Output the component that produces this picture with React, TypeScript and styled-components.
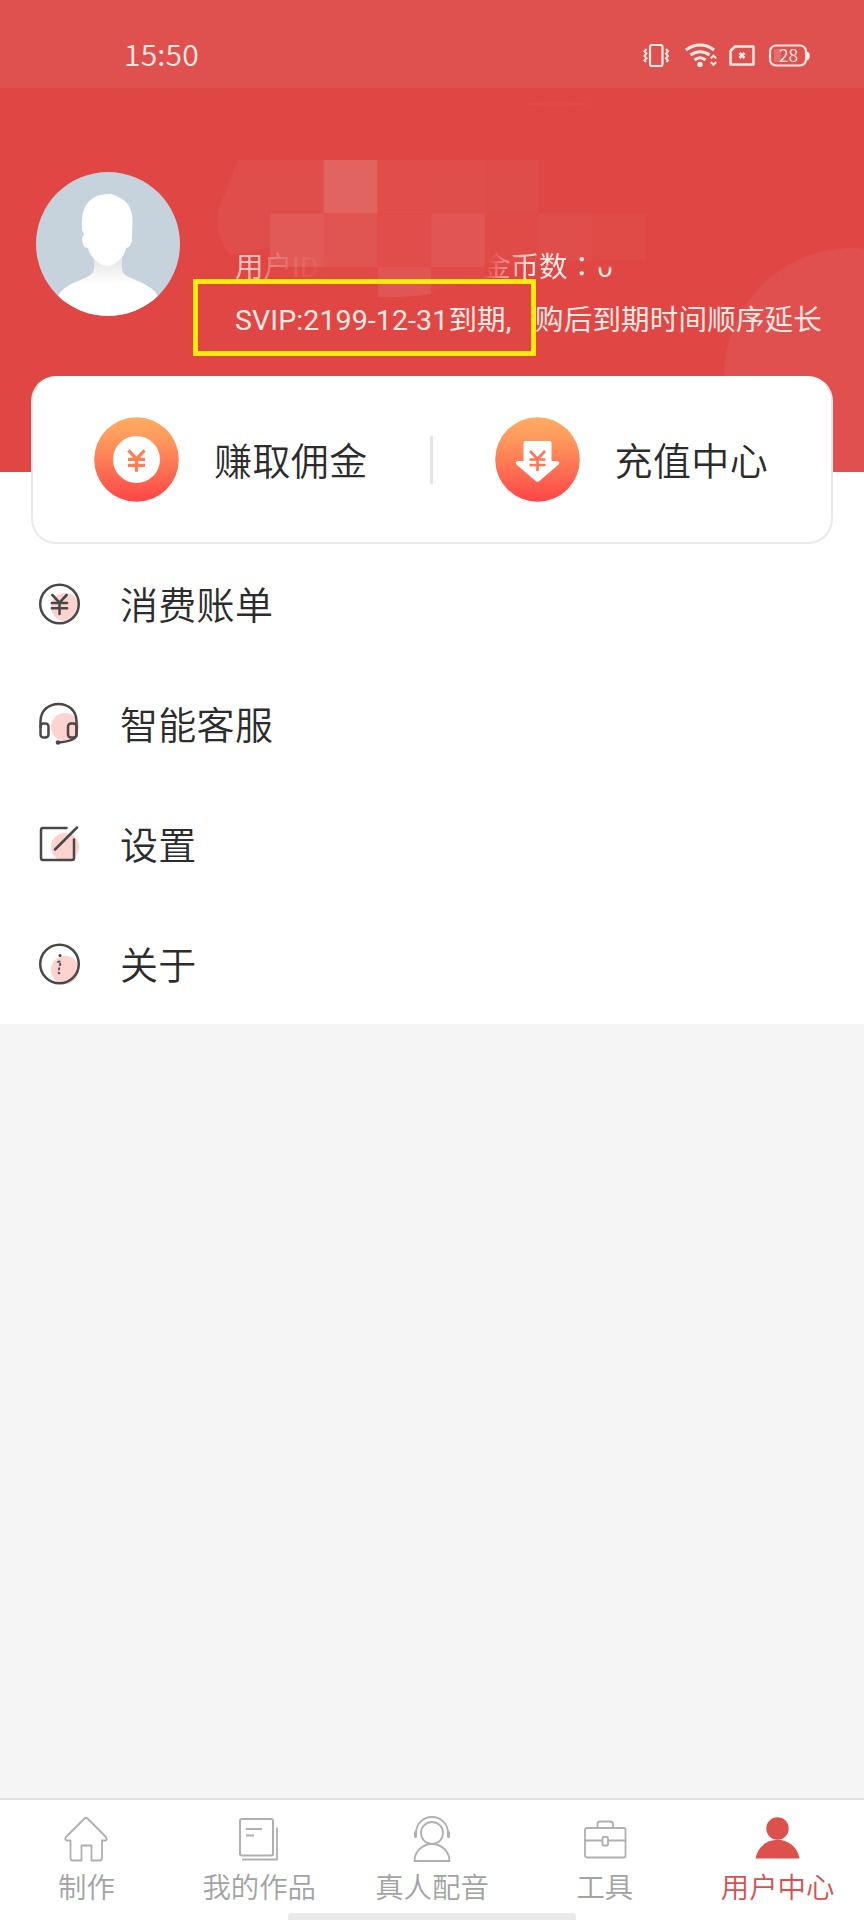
import React from "react";
import styled, { createGlobalStyle } from "styled-components";

const GlobalStyle = createGlobalStyle`
  * { box-sizing: border-box; }
  body {
    margin: 0;
    background: #f5f5f5;
    font-family: Roboto, "Noto Sans CJK SC", sans-serif;
    font-weight: 400;
  }
`;

const Screen = styled.div`
  width: 864px;
  height: 1920px;
  display: flex;
  flex-direction: column;
  background: #f5f5f5;
  overflow: hidden;
`;

const Hero = styled.header`
  position: relative;
  height: 472px;
  flex: none;
  background: #e04643;
  overflow: hidden;
`;

const StatusBar = styled.div`
  height: 88px;
  padding: 22px 53px 0 124px;
  display: flex;
  align-items: center;
  justify-content: space-between;
  background: #de514e;
  color: #ffe9e4;
`;

const Clock = styled.span`
  margin-top: -4px;
  font: 350 30px/36px "Noto Sans CJK SC", sans-serif;
  letter-spacing: 0.2px;
`;

const StatusIcons = styled.div`
  display: flex;
  align-items: center;
  padding-top: 1px;
`;

const HeroDecor = styled.svg`
  position: absolute;
  left: 0;
  top: 88px;
`;

const Profile = styled.div`
  position: relative;
  display: flex;
  padding: 84px 0 0 36px;
`;

const Avatar = styled.svg`
  width: 144px;
  height: 144px;
  flex: none;
`;

const ProfileText = styled.div`
  position: relative;
  padding: 77px 0 0 55px;
  color: #ffe9e4;
  font-size: 28.5px;
  white-space: nowrap;
`;

const AccountLine = styled.div`
  display: flex;
  height: 38px;
  line-height: 38px;
`;

const UserId = styled.span`
  width: 247px;
  mask-image: linear-gradient(90deg, rgba(0, 0, 0, 0.75) 0 24px, rgba(0, 0, 0, 0.3) 34px, rgba(0, 0, 0, 0.12) 60px, transparent 96px);
`;

const CoinLabel = styled.span`
  width: 115px;
  margin-top: -3px;
  mask-image: linear-gradient(115deg, transparent 0 12px, rgba(0, 0, 0, 0.5) 32px, #000 52px);
`;

const Colon = styled.span`
  font-family: "Noto Sans CJK TC", sans-serif;
`;

const CoinValue = styled.span`
  mask-image: linear-gradient(180deg, transparent 0 17px, #000 20px);
`;

const VipLine = styled.div`
  height: 38px;
  margin-top: 15px;
  line-height: 38px;
  display: flex;
`;

const VipExpiry = styled.span`
  width: 300px;
  letter-spacing: 0.12px;
`;

const VipNote = styled.span`
  letter-spacing: 0.2px;
`;

const Mosaic = styled.svg`
  position: absolute;
  left: 205px;
  top: 72px;
`;

const Highlight = styled.div`
  position: absolute;
  left: 193px;
  top: 279px;
  width: 343px;
  height: 77px;
  border: 5px solid #ffeb0f;
`;

const Body = styled.main`
  position: relative;
  height: 552px;
  flex: none;
  background: #fff;
`;

const ActionCard = styled.section`
  position: relative;
  height: 168px;
  margin: -96px 31px 0;
  display: flex;
  align-items: center;
  background: #fff;
  border: 2px solid #e9e9e9;
  border-top-color: #fff;
  border-radius: 25px;
`;

const Action = styled.button`
  flex: 1;
  height: 100%;
  padding: 0 0 2px 61px;
  display: flex;
  align-items: center;
  gap: 35px;
  border: 0;
  background: none;
  color: #2c2c2c;
  font: 350 38px/48px "Noto Sans CJK SC", sans-serif;
  letter-spacing: 0.4px;
`;

const Divider = styled.i`
  width: 3px;
  height: 48px;
  margin: 0 1px 0 -1px;
  background: #e6e6e6;
`;

const Menu = styled.nav`
  display: flex;
  flex-direction: column;
`;

const MenuItem = styled.a`
  height: 120px;
  padding: 0 0 0 36px;
  display: flex;
  align-items: center;
  gap: 36px;
  color: #2c2c2c;
  font: 350 38px/48px "Noto Sans CJK SC", sans-serif;
  letter-spacing: 0.3px;

  svg { flex: none; }
`;

const MenuLabel = styled.span`
  margin-top: -2px;
`;

const TabBar = styled.footer`
  position: relative;
  height: 122px;
  margin-top: auto;
  display: flex;
  background: #fff;
  border-top: 2px solid #e2e2e2;
`;

const Tab = styled.button<{ $active?: boolean }>`
  flex: 1;
  padding: 15px 0 0;
  display: flex;
  flex-direction: column;
  align-items: center;
  gap: 4px;
  border: 0;
  background: none;
  color: ${(p) => (p.$active ? "#d9504e" : "#a3a3a3")};
  font: 350 28.4px/38px "Noto Sans CJK SC", sans-serif;
  white-space: nowrap;
`;

const HomeIndicator = styled.div`
  position: absolute;
  left: 288px;
  bottom: 0;
  width: 288px;
  height: 7px;
  border-radius: 4px 4px 0 0;
  background: #e9e9e9;
`;

const Yen = ({ x, y, s = 1, color, w = 2.4 }: { x: number; y: number; s?: number; color: string; w?: number }) => (
  <g transform={`translate(${x} ${y}) scale(${s})`} fill="none" stroke={color} strokeWidth={w}>
    <path d="M-7.5-10 0-2 7.5-10M0-2V10M-8-1.5H8M-8 4H8" />
  </g>
);

/* Tiles of the pixelated band: column, row, colour */
const tiles: [number, number, string][] = [
  [0, 0, "#e04e4b"], [1, 0, "#e26461"], [2, 0, "#e04d4a"], [3, 0, "#e04e4c"], [4, 0, "#df4d4a"],
  [0, 1, "#e15a57"], [1, 1, "#e05552"], [2, 1, "#e04d4a"], [3, 1, "#e15655"], [4, 1, "#e04b48"],
  [5, 1, "#e04e4c"], [6, 1, "#e04a47"],
];

function StatusGlyphs() {
  return (
    <StatusIcons>
      <svg width="168" height="30" viewBox="0 0 168 30" fill="none" stroke="#ffe9e4" strokeWidth="2">
        <rect x="7" y="4" width="12.5" height="21" rx="2" strokeWidth="2.2" />
        <path d="m3.500 8-2 2.300 2 2.300-2 2.300 2 2.300-2 2.300 1.500 1.500M23 8l2 2.300-2 2.300 2 2.300-2 2.300 2 2.300-1.500 1.500" strokeWidth="2" />
        <path d="M43 9c8.500-6.800 20-6.800 28 0M47.500 14c6-4.500 13.500-4.500 19 0M51.500 19c3.500-2.700 7.800-2.700 11 0" strokeWidth="3" />
        <circle cx="57" cy="23.500" r="2.700" fill="#ffe9e4" stroke="none" />
        <path d="m67.800 17.500 2.700-2.900 2.700 2.900M67.800 21l2.700 2.900 2.700-2.900" strokeWidth="2" />
        <path d="M92 5.500H110.500V23.500H87.500V10Z" strokeLinejoin="round" strokeWidth="2.500" />
        <path d="m96.500 12 5 5m0-5-5 5" strokeWidth="2.600" />
        <rect x="127" y="4.500" width="36" height="20" rx="6" strokeWidth="2.200" />
        <path d="M164 11.500c2.500 1 2.500 6 0 7" fill="#ffe9e4" />
        <path d="M131 8h7v13h-7z" fill="#fff" opacity=".18" stroke="none" />
        <text x="145.500" y="20.500" textAnchor="middle" fill="#ffe9e4" stroke="none" fontSize="17.500" fontWeight="350" fontFamily="Noto Sans CJK SC, sans-serif">28</text>
      </svg>
    </StatusIcons>
  );
}

function AvatarPicture() {
  return (
    <Avatar viewBox="0 0 144 144">
      <defs>
        <clipPath id="face"><circle cx="72" cy="72" r="72" /></clipPath>
        <linearGradient id="neck" x1="0" y1="84" x2="0" y2="112" gradientUnits="userSpaceOnUse">
          <stop stopColor="#e2e2e2" /><stop offset="1" stopColor="#fff" />
        </linearGradient>
      </defs>
      <g clipPath="url(#face)">
        <rect width="144" height="144" fill="#c7d3dc" />
        <path d="M58 82v13c0 6-3 8-9 11-14 6-25 9-29 24v14h105v-14c-5-14-16-18-30-24-7-3-9-5-9-11V82Z" fill="url(#neck)" />
        <path d="M46 55c-1-20 7-33 27-33 5 0 7 2 11 4 11 5 14 16 12 33 1 4-1 6 0 9-1 5-3 8-6 8-1 6-4 10-9 14-4 3-6 4-10 4s-8-3-12-6c-4-4-6-8-7-12-4 0-5-3-6-8 0-4 2-4 2-6-2-2-2-5-2-7Z" fill="#fff" />
      </g>
    </Avatar>
  );
}

function GradientDisc({ id, children }: { id: string; children: React.ReactNode }) {
  return (
    <svg width="85" height="85" viewBox="0 0 85 85">
      <defs>
        <linearGradient id={id} x1="0" y1="0" x2="0" y2="1">
          <stop stopColor="#ffab60" /><stop offset=".25" stopColor="#ff9a5d" /><stop offset="1" stopColor="#ff4548" />
        </linearGradient>
      </defs>
      <circle cx="42.500" cy="42.500" r="42.300" fill={`url(#${id})`} />
      {children}
    </svg>
  );
}

const MenuIcon = ({ cx = 29, cy = 27, children }: { cx?: number; cy?: number; children: React.ReactNode }) => (
  <svg width="48" height="48" viewBox="0 0 48 48" fill="none" stroke="#484848" strokeWidth="2.500" strokeLinecap="round" strokeLinejoin="round">
    <circle cx={cx} cy={cy} r="14" fill="#fcd3ce" stroke="none" />
    {children}
  </svg>
);

const TabIcon = ({ children }: { children: React.ReactNode }) => (
  <svg width="48" height="48" viewBox="0 0 48 48" fill="none" stroke="#b0b0b0" strokeWidth="1.800" strokeLinejoin="round" strokeLinecap="round">
    {children}
  </svg>
);

export default function App() {
  return (
    <>
      <GlobalStyle />
      <Screen>
        <Hero>
          <StatusBar>
            <Clock>15:50</Clock>
            <StatusGlyphs />
          </StatusBar>
          <HeroDecor width="864" height="384">
            <circle cx="852" cy="288" r="128" fill="#e0504e" />
            <ellipse cx="557" cy="16" rx="34" ry="2.500" fill="#e04f4c" opacity=".6" />
          </HeroDecor>
          <Profile>
            <AvatarPicture />
            <Mosaic width="460" height="140">
              <path d="M33 0H65V88L25 95Q2 65 20 34Z" fill="#e04e4b" />
              {tiles.map(([c, r, color]) => (
                <rect key={`${c}-${r}`} x={65 + c * 53.7} y={r * 53.5} width="54" height={c > 4 ? 47 : 53.5} fill={color} />
              ))}
              <path d="M65 107H173V119Q100 124 65 112Z" fill="#e04946" />
              <path d="M173 107H226V134Q195 138 173 137Z" fill="#e05654" />
              <path d="M226 107H280V119L226 130Z" fill="#e04b49" />
            </Mosaic>
            <ProfileText>
              <AccountLine>
                <UserId>用户ID：</UserId>
                <CoinLabel>金币数<Colon>：</Colon></CoinLabel>
                <CoinValue>0</CoinValue>
              </AccountLine>
              <VipLine>
                <VipExpiry>SVIP:2199-12-31到期,</VipExpiry>
                <VipNote>购后到期时间顺序延长</VipNote>
              </VipLine>
            </ProfileText>
          </Profile>
          <Highlight />
        </Hero>

        <Body>
          <ActionCard>
            <Action>
              <GradientDisc id="earn">
                <circle cx="42.500" cy="42.500" r="23.500" fill="#fff" />
                <Yen x={42.5} y={44} s={1.07} color="#ff7f55" w={3} />
              </GradientDisc>
              赚取佣金
            </Action>
            <Divider />
            <Action>
              <GradientDisc id="topup">
                <path d="M30.500 24H54.500Q56.500 24 56.500 26V44H62Q66 45 63 48L45 63.500Q42.500 66 40 63.500L22 48Q19 45 23 44H28.500V26Q28.500 24 30.500 24Z" fill="#fff" />
                <Yen x={42.5} y={44} s={1} color="#ff7655" w={2.6} />
              </GradientDisc>
              充值中心
            </Action>
          </ActionCard>

          <Menu>
            <MenuItem>
              <MenuIcon>
                <circle cx="23.500" cy="24" r="19.300" />
                <Yen x={23.5} y={24.5} s={0.95} color="#484848" w={2.7} />
              </MenuIcon>
              <MenuLabel>消费账单</MenuLabel>
            </MenuItem>
            <MenuItem>
              <MenuIcon>
                <path d="M4.500 27V21.500C4.500 -2 40.500 -2 40.500 21.500V35Q40 41 22 42.500" />
                <rect x="4.500" y="23.500" width="8" height="14" rx="3" />
                <rect x="32" y="23.500" width="8.500" height="14" rx="3" />
                <circle cx="22" cy="42.500" r="2.300" fill="#484848" stroke="none" />
              </MenuIcon>
              <MenuLabel>智能客服</MenuLabel>
            </MenuItem>
            <MenuItem>
              <MenuIcon>
                <path d="M30.500 8H7Q5 8 5 10V38Q5 40 7 40H36Q38 40 38 38V19.500M19 29.500 41 7.500" />
              </MenuIcon>
              <MenuLabel>设置</MenuLabel>
            </MenuItem>
            <MenuItem>
              <MenuIcon cy={30}>
                <circle cx="23.500" cy="24" r="19.300" />
                <circle cx="24" cy="15.500" r="1.500" fill="#484848" stroke="none" />
                <path d="M22 22Q25 20.500 24.500 23L22.500 31Q22 34.500 25 32.500" strokeWidth="1.800" strokeDasharray="1.500 3" />
              </MenuIcon>
              <MenuLabel>关于</MenuLabel>
            </MenuItem>
          </Menu>
        </Body>

        <TabBar>
          <Tab>
            <TabIcon>
              <path d="M22.500 3.500Q24 2 25.500 3.500L44 22Q46 25.500 43 25.500H40V43Q40 45.500 37.500 45.500H29.500V30.500H19.500V45.500H11Q8.500 45.500 8.500 43V25.500H5Q2 25 4 22Z" />
            </TabIcon>
            制作
          </Tab>
          <Tab>
            <TabIcon>
              <rect x="5" y="4" width="33" height="36.500" rx="2" strokeWidth="2" />
              <path d="M11 14H27M11 20.500H19M42 12.500V44.500H7" strokeLinecap="butt" />
            </TabIcon>
            我的作品
          </Tab>
          <Tab>
            <TabIcon>
              <circle cx="24" cy="18" r="11" />
              <path d="M8 20V18A16 16 0 0 1 40 18V20M6.500 46H41.500A17.500 17 0 0 0 6.500 46Z" />
              <path d="M7.500 17.500V21.500M40.500 17.500V21.500" strokeWidth="3" />
            </TabIcon>
            真人配音
          </Tab>
          <Tab>
            <TabIcon>
              <rect x="4" y="13" width="40.500" height="29.500" rx="2" />
              <path d="M16.500 13V9Q16.500 6.500 19 6.500H29Q32 6.500 32 9V13M4 25.500H21M27 25.500H44.500" />
              <rect x="21.500" y="22" width="5.500" height="8.500" rx="1" />
            </TabIcon>
            工具
          </Tab>
          <Tab $active>
            <TabIcon>
              <circle cx="23.500" cy="13.500" r="11.200" fill="#dc504d" stroke="none" />
              <path d="M1.500 43.500C6 18.500 41 18.500 45.500 43.500Z" fill="#dc504d" stroke="none" />
            </TabIcon>
            用户中心
          </Tab>
          <HomeIndicator />
        </TabBar>
      </Screen>
    </>
  );
}
